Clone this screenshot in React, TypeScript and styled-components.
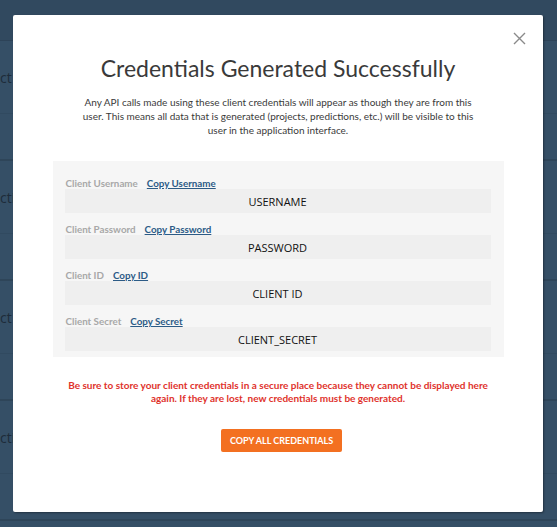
import styled, { createGlobalStyle } from 'styled-components'

const GlobalStyle = createGlobalStyle`
  html, body {
    margin: 0;
    padding: 0;
    background: #354f66;
  }
  body {
    font-family: Lato, 'Open Sans', sans-serif;
    overflow: hidden;
  }
`

const Page = styled.div`
  position: relative;
  width: 557px;
  height: 527px;
  overflow: hidden;
  background: #354f66;
`

const PageHeader = styled.div`
  height: 40px;
  background: #31495f;
  border-bottom: 1px solid #2d4358;
`

const ListRow = styled.div`
  height: 118px;
  border-bottom: 2px solid #2e4559;
  display: flex;
  flex-direction: column;
`

const RowTitle = styled.div`
  height: 72px;
  display: flex;
  align-items: center;
  border-bottom: 1px solid #314a60;
  font-family: 'Open Sans', sans-serif;
  font-size: 14px;
  color: #1d2c3a;
  margin-left: -34px;
`

const Modal = styled.div`
  position: absolute;
  left: 13px;
  top: 15px;
  width: 530px;
  height: 497px;
  background: #fff;
  border-radius: 2px;
  box-shadow: 1px 1px 2px rgba(0, 0, 0, 0.35);
  display: flex;
  flex-direction: column;
  align-items: center;
  box-sizing: border-box;
  padding-top: 38px;
`

const Close = styled.button`
  position: absolute;
  top: 17px;
  right: 17px;
  width: 13px;
  height: 13px;
  padding: 0;
  border: 0;
  background: none;
  cursor: pointer;
`

const Title = styled.h2`
  margin: 0;
  font-family: Lato, sans-serif;
  font-weight: 400;
  font-size: 23px;
  line-height: 30px;
  color: #3a3a3a;
`

const Intro = styled.p`
  margin: 12px 0 0;
  width: 400px;
  font-size: 10px;
  line-height: 14px;
  color: #3a3a3a;
  text-align: center;
`

const Panel = styled.div`
  margin-top: 24px;
  width: 451px;
  box-sizing: border-box;
  background: #f6f6f6;
  padding: 16px 13px 6px 12px;
  display: flex;
  flex-direction: column;
`

const Field = styled.div`
  display: flex;
  flex-direction: column;
  & + & {
    margin-top: 10px;
  }
`

const LabelRow = styled.div`
  display: flex;
  align-items: center;
  gap: 9px;
  padding-left: 1px;
  height: 12px;
  font-size: 9.8px;
  font-weight: 700;
`

const Label = styled.span`
  color: #a8a8a8;
`

const CopyLink = styled.a`
  color: #2c5b86;
  text-decoration: underline;
  cursor: pointer;
`

const Value = styled.div`
  height: 24px;
  background: #efefef;
  display: flex;
  align-items: center;
  justify-content: center;
  font-family: 'Open Sans', sans-serif;
  font-size: 11px;
  color: #111;
`

const Warning = styled.p`
  margin: 22px 0 0;
  width: 440px;
  font-size: 10px;
  line-height: 13px;
  font-weight: 700;
  color: #e0322c;
  text-align: center;
`

const CopyAll = styled.button`
  margin: 24px 0 0 7px;
  width: 121px;
  height: 23px;
  border: 0;
  border-radius: 2px;
  background: #f37021;
  color: #fff;
  font-family: Lato, sans-serif;
  font-weight: 700;
  font-size: 9px;
  cursor: pointer;
`

const credentials = [
  { label: 'Client Username', link: 'Copy Username', value: 'USERNAME' },
  { label: 'Client Password', link: 'Copy Password', value: 'PASSWORD' },
  { label: 'Client ID', link: 'Copy ID', value: 'CLIENT ID' },
  { label: 'Client Secret', link: 'Copy Secret', value: 'CLIENT_SECRET' },
]

const rows = ['Project', 'Predicti', 'Project', 'Predicti']

export default function App() {
  return (
    <>
      <GlobalStyle />
      <Page>
        <PageHeader />
        {rows.map((r, i) => (
          <ListRow key={i}>
            <RowTitle>{r}</RowTitle>
          </ListRow>
        ))}
        <Modal>
          <Close aria-label="Close">
            <svg width="13" height="13" viewBox="0 0 13 13">
              <path d="M1 1 L12 12 M12 1 L1 12" stroke="#8a8a8a" strokeWidth="1.4" />
            </svg>
          </Close>
          <Title>Credentials Generated Successfully</Title>
          <Intro>
            Any API calls made using these client credentials will appear as though they are from this
            user. This means all data that is generated (projects, predictions, etc.) will be visible to this
            user in the application interface.
          </Intro>
          <Panel>
            {credentials.map((c) => (
              <Field key={c.label}>
                <LabelRow>
                  <Label>{c.label}</Label>
                  <CopyLink>{c.link}</CopyLink>
                </LabelRow>
                <Value>{c.value}</Value>
              </Field>
            ))}
          </Panel>
          <Warning>
            Be sure to store your client credentials in a secure place because they cannot be displayed here
            again. If they are lost, new credentials must be generated.
          </Warning>
          <CopyAll>COPY ALL CREDENTIALS</CopyAll>
        </Modal>
      </Page>
    </>
  )
}
